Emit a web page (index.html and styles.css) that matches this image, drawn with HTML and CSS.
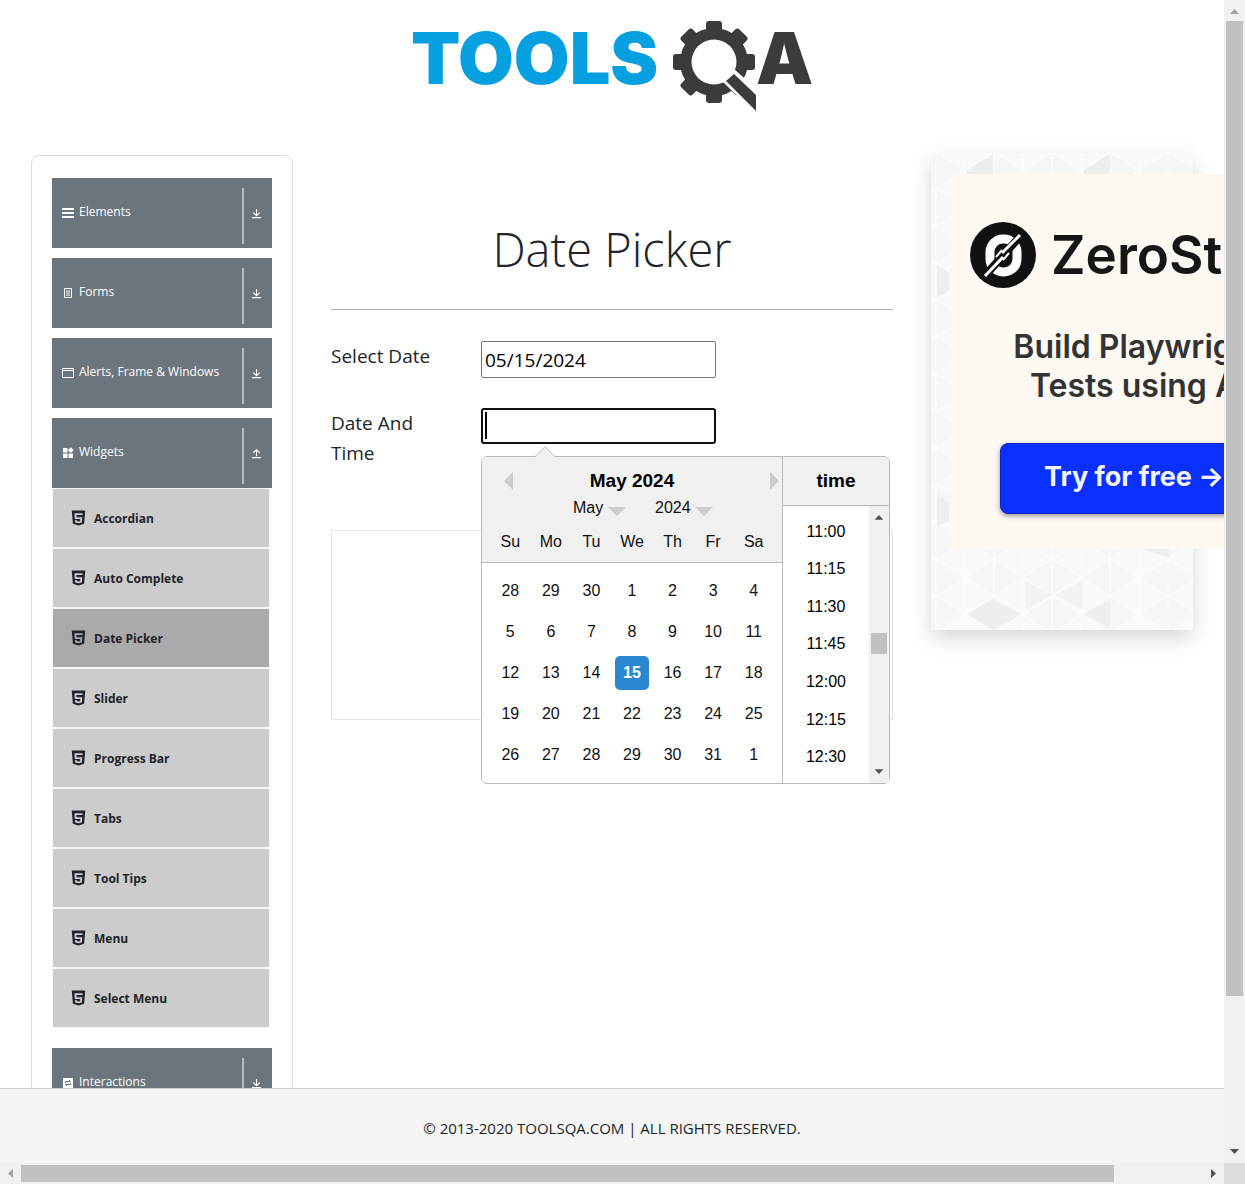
FILE: index.html
```html
<!DOCTYPE html>
<html lang="en">
<head>
<meta charset="utf-8">
<title>Date Picker</title>
<link rel="stylesheet" href="styles.css">
</head>
<body>
<svg class="defs" aria-hidden="true">
  <symbol id="i-html5" viewBox="0 0 16 16"><path fill="currentColor" fill-rule="evenodd" d="M.8 0h14.4L14 14.2 8 16l-6-1.8zM3.6 3l.5 6h5.8l-.2 2.3-1.7.5-1.8-.5-.1-1.1H4.3l.2 2.5 3.5 1 3.5-1 .5-5.5H6L5.800 4.900h6.400L12.400 3z"/></symbol>
  <symbol id="i-down" viewBox="0 0 12 12"><path fill="none" stroke="currentColor" stroke-width="1.2" d="M6 1v7M2.500 5 6 8.400 9.500 5M1 10.500h10"/></symbol>
  <symbol id="i-up" viewBox="0 0 12 12"><path fill="none" stroke="currentColor" stroke-width="1.2" d="M6 9V2M2.500 5.200 6 1.800l3.500 3.400M1 10.500h10"/></symbol>
</svg>
<div class="window">
  <div class="view">
    <header class="site-header">
      <a href="#" class="logo" aria-label="ToolsQA">
        <svg width="404" height="94" viewBox="0 0 404 94">
          <text class="brand brand-blue" x="-1" y="64">TOOLS</text>
          <g fill="#3b3b3b" transform="translate(302 42)">
            <circle r="34"/>
            <rect x="-8" y="-41" width="16" height="82" rx="3"/>
            <rect x="-8" y="-41" width="16" height="82" rx="3" transform="rotate(45)"/>
            <rect x="-8" y="-41" width="16" height="82" rx="3" transform="rotate(90)"/>
            <rect x="-8" y="-41" width="16" height="82" rx="3" transform="rotate(135)"/>
            <circle r="22.500" fill="#fff"/>
            <path fill="#fff" d="M8 19 20 7 46 30v26z"/>
            <path d="m12 19 8-7 22 21v16z"/>
          </g>
          <text class="brand brand-dark" x="344" y="64">A</text>
        </svg>
      </a>
    </header>

    <main class="columns">
      <nav class="sidebar" aria-label="Sections">
        <button class="group"><svg class="g-icon" viewBox="0 0 12 12"><path stroke="currentColor" stroke-width="2" d="M0 2h12M0 6h12M0 10h12"/></svg><span class="g-name">Elements</span><span class="g-toggle"><svg class="t-icon"><use href="#i-down"/></svg></span></button>
        <button class="group"><svg class="g-icon" viewBox="0 0 12 12"><path fill="none" stroke="currentColor" d="M2.500 1.500h7v9h-7zM4 4h4M4 6h4M4 8h4"/></svg><span class="g-name">Forms</span><span class="g-toggle"><svg class="t-icon"><use href="#i-down"/></svg></span></button>
        <button class="group"><svg class="g-icon" viewBox="0 0 12 12"><path fill="none" stroke="currentColor" d="M.5 1.500h11v9H.5zM.5 3.500h11"/></svg><span class="g-name">Alerts, Frame &amp; Windows</span><span class="g-toggle"><svg class="t-icon"><use href="#i-down"/></svg></span></button>
        <div class="open-group">
          <button class="group"><svg class="g-icon" viewBox="0 0 12 12"><path fill="currentColor" d="M1 1h4.500v4.500H1zM1 6.500h4.500V11H1zM6.500 6.500H11V11H6.500zM8.800.3l2.900 2.900-2.900 2.900-2.900-2.900z"/></svg><span class="g-name">Widgets</span><span class="g-toggle"><svg class="t-icon"><use href="#i-up"/></svg></span></button>
          <ul class="items">
            <li><a href="#" class="item"><svg class="h5"><use href="#i-html5"/></svg><span>Accordian</span></a></li>
            <li><a href="#" class="item"><svg class="h5"><use href="#i-html5"/></svg><span>Auto Complete</span></a></li>
            <li><a href="#" class="item active"><svg class="h5"><use href="#i-html5"/></svg><span>Date Picker</span></a></li>
            <li><a href="#" class="item"><svg class="h5"><use href="#i-html5"/></svg><span>Slider</span></a></li>
            <li><a href="#" class="item"><svg class="h5"><use href="#i-html5"/></svg><span>Progress Bar</span></a></li>
            <li><a href="#" class="item"><svg class="h5"><use href="#i-html5"/></svg><span>Tabs</span></a></li>
            <li><a href="#" class="item"><svg class="h5"><use href="#i-html5"/></svg><span>Tool Tips</span></a></li>
            <li><a href="#" class="item"><svg class="h5"><use href="#i-html5"/></svg><span>Menu</span></a></li>
            <li><a href="#" class="item"><svg class="h5"><use href="#i-html5"/></svg><span>Select Menu</span></a></li>
          </ul>
        </div>
        <button class="group"><svg class="g-icon" viewBox="0 0 12 12"><path fill="currentColor" d="M1 1h10v10H1z"/><path fill="none" stroke="#6c757d" d="M3.500 6V4.500h5M7 3l1.500 1.500M8.500 6v1.500h-5M5 9 3.500 7.500"/></svg><span class="g-name">Interactions</span><span class="g-toggle"><svg class="t-icon"><use href="#i-down"/></svg></span></button>
      </nav>

      <section class="content">
        <h1 class="title">Date Picker</h1>
        <form class="form">
          <div class="field">
            <label for="date">Select Date</label>
            <input class="box" id="date" type="text" value="05/15/2024">
          </div>
          <div class="field">
            <label for="datetime">Date And Time</label>
            <div class="picker">
              <input class="box focused" id="datetime" type="text">
              <span class="caret"></span>
              <div class="popup">
                <svg class="tip" width="20" height="11" viewBox="0 0 20 11"><path fill="#f0f0f0" stroke="#bbb" d="M0 10.500 10 .7l10 9.800"/><path stroke="#f0f0f0" d="M1 10.500h18"/></svg>
                <div class="month">
                  <div class="month-head">
                    <div class="month-nav">
                      <button type="button" class="nav prev" aria-label="Previous month"><svg width="9" height="18"><path fill="#ccc" d="M9 0v18L0 9z"/></svg></button>
                      <strong class="head-text">May 2024</strong>
                      <button type="button" class="nav next" aria-label="Next month"><svg width="9" height="18"><path fill="#ccc" d="M0 0v18l9-9z"/></svg></button>
                    </div>
                    <div class="drops">
                      <span class="drop"><select aria-label="Month"><option>May</option></select><svg width="18" height="9"><path fill="#ccc" d="M0 0h18L9 9z"/></svg></span>
                      <span class="drop"><select aria-label="Year"><option>2024</option></select><svg width="18" height="9"><path fill="#ccc" d="M0 0h18L9 9z"/></svg></span>
                    </div>
                    <div class="week names"><span>Su</span><span>Mo</span><span>Tu</span><span>We</span><span>Th</span><span>Fr</span><span>Sa</span></div>
                  </div>
                  <div class="days">
                    <div class="week"><button type="button">28</button><button type="button">29</button><button type="button">30</button><button type="button">1</button><button type="button">2</button><button type="button">3</button><button type="button">4</button></div>
                    <div class="week"><button type="button">5</button><button type="button">6</button><button type="button">7</button><button type="button">8</button><button type="button">9</button><button type="button">10</button><button type="button">11</button></div>
                    <div class="week"><button type="button">12</button><button type="button">13</button><button type="button">14</button><button type="button" class="selected">15</button><button type="button">16</button><button type="button">17</button><button type="button">18</button></div>
                    <div class="week"><button type="button">19</button><button type="button">20</button><button type="button">21</button><button type="button">22</button><button type="button">23</button><button type="button">24</button><button type="button">25</button></div>
                    <div class="week"><button type="button">26</button><button type="button">27</button><button type="button">28</button><button type="button">29</button><button type="button">30</button><button type="button">31</button><button type="button">1</button></div>
                  </div>
                </div>
                <div class="time">
                  <div class="time-head head-text">time</div>
                  <div class="time-body">
                    <ul class="times"><li>11:00</li><li>11:15</li><li>11:30</li><li>11:45</li><li>12:00</li><li>12:15</li><li>12:30</li></ul>
                    <div class="bar bar-v">
                      <svg class="arrow" viewBox="0 0 21 21"><path fill="#505050" d="M6 14h9l-4.500-5z"/></svg>
                      <div class="track time-track"><div class="thumb"></div></div>
                      <svg class="arrow" viewBox="0 0 21 21"><path fill="#505050" d="M6 7h9l-4.500 5z"/></svg>
                    </div>
                  </div>
                </div>
              </div>
            </div>
          </div>
        </form>
        <div class="slot"></div>
      </section>

      <aside class="promo">
        <svg class="facets" aria-hidden="true">
          <defs>
            <pattern id="tri" width="58" height="37" x="5" y="-1" patternUnits="userSpaceOnUse">
              <path fill="#f9f9f9" d="M0 0h58v37H0z"/>
              <path fill="#f6f6f6" d="M0 0v37l29-18.500zM29 18.500 58 37V0z"/>
              <path fill="none" stroke="#fdfdfd" stroke-width="1.200" d="M0 0v37M29 0v37M58 0v37M0 0l58 37M58 0 0 37"/>
            </pattern>
          </defs>
          <rect width="100%" height="100%" fill="url(#tri)"/>
          <path fill="#eee" d="m36 17 26-16v32H36zM153 17l26-16v32h-26zM6 112l12 8v18l-12 6zM6 342l12 8v18l-12 6zM36 461l26-15 28 15-28 16zM153 461l26-14v28zM212 396h26v9z"/>
          <path fill="#f2f2f2" d="m94 428 27 14-27 15zM124 442l28-15v30z"/>
        </svg>
        <a href="#" class="ad">
          <span class="ad-brand">
            <svg width="66" height="66" viewBox="0 0 66 66"><circle cx="33" cy="33" r="33" fill="#111"/><rect x="20" y="17" width="27" height="33" rx="13" fill="none" stroke="#fff" stroke-width="9"/><path stroke="#111" stroke-width="8" d="M12 57 54 10"/><path stroke="#fff" stroke-width="3" d="m15 54 18-19M32 31l18-18"/><path stroke="#fff" stroke-width="2" d="m26 35 6-7M33 38l6-7"/></svg>
            <span>ZeroStep</span>
          </span>
          <span class="ad-text">Build Playwright<br>Tests using AI</span>
          <span class="ad-cta">Try for free →</span>
        </a>
      </aside>
    </main>

    <footer class="site-footer">© 2013-2020 TOOLSQA.COM | ALL RIGHTS RESERVED.</footer>
  </div>

  <div class="bar bar-v">
    <svg class="arrow" viewBox="0 0 21 21"><path fill="#a3a3a3" d="M6 14h9l-4.500-5z"/></svg>
    <div class="track page-track"><div class="thumb"></div></div>
    <svg class="arrow" viewBox="0 0 21 21"><path fill="#505050" d="M6 7h9l-4.500 5z"/></svg>
  </div>
  <div class="bar bar-h">
    <svg class="arrow" viewBox="0 0 21 21"><path fill="#a3a3a3" d="M13 6v9l-5-4.500z"/></svg>
    <div class="track side-track"><div class="thumb"></div></div>
    <svg class="arrow" viewBox="0 0 21 21"><path fill="#505050" d="M8 6v9l5-4.500z"/></svg>
  </div>
  <div class="corner"></div>
</div>
</body>
</html>
```
FILE: styles.css
```css
* { box-sizing: border-box; }

body {
  margin: 0;
  background: #fff;
  color: #212529;
  font: 19px/30px "Open Sans", "Noto Sans", sans-serif;
}

button, input, select { font: inherit; color: inherit; }
button { margin: 0; padding: 0; border: 0; background: none; }
ul { margin: 0; padding: 0; list-style: none; }
a { color: inherit; text-decoration: none; }
svg { display: block; flex: none; }
.defs { position: absolute; width: 0; height: 0; }

/* Window frame: page, two scroll bars, corner */
.window {
  display: grid;
  grid-template-columns: minmax(0, 1fr) 21px;
  grid-template-rows: minmax(0, 1fr) 21px;
  height: 100vh;
}
.view { display: flex; flex-direction: column; overflow: hidden; }
.corner { background: #dcdcdc; }

.bar { display: flex; background: #f0f0f0; }
.bar-v { flex-direction: column; }
.arrow { width: 21px; height: 21px; }
.track { display: flex; flex: 1; }
.thumb { background: #c1c1c1; }
.bar-v .track { flex-direction: column; padding: 0 2px; }
.bar-h .track { padding: 2px 0; }
.page-track .thumb { height: 87%; }
.side-track .thumb { width: 92.500%; }

/* Header and footer */
.site-header { display: flex; justify-content: center; padding: 20px 0 39px; }
.logo { margin-left: 4px; }
.logo svg { overflow: visible; }
.brand { font: 900 72px Inter, sans-serif; }
.brand-blue { fill: #069fdf; }
.brand-dark { fill: #3b3b3b; }
.site-footer {
  flex: none;
  height: 75px;
  padding-top: 24px;
  border-top: 1px solid #ccc;
  background: #f4f4f4;
  font-size: 15px;
  text-align: center;
}

.columns {
  flex: 1;
  min-height: 0;
  display: grid;
  grid-template-columns: 262px minmax(0, 1fr) 262px;
  align-items: start;
  gap: 38px;
  padding: 2px 31px 0;
}

/* Sidebar */
.sidebar {
  display: flex;
  flex-direction: column;
  gap: 10px;
  padding: 22px 20px;
  border: 1px solid #dedede;
  border-radius: 8px;
  font-size: 12px;
}
.group {
  display: flex;
  align-items: center;
  width: 100%;
  height: 70px;
  padding-left: 10px;
  background: #6c757d;
  color: #fff;
  text-align: left;
}
.g-icon { width: 12px; height: 12px; }
.g-name { flex: 1; padding: 0 0 2px 5px; white-space: nowrap; }
.g-toggle {
  display: flex;
  align-items: center;
  height: 56px;
  margin-top: 6px;
  padding: 0 10px 5px 7px;
  border-left: 2px solid #bbb;
}
.t-icon { width: 11px; height: 11px; }
.open-group { padding-bottom: 10px; }
.items { width: 218px; }
.item {
  display: flex;
  align-items: center;
  gap: 8px;
  height: 60px;
  padding-left: 18px;
  border: 1px solid #f7f7f7;
  background: #ccc;
  font-weight: 700;
}
.item span { padding-top: 2px; }
.item.active { background: #aaa; }
.h5 { width: 15px; height: 16px; }

/* Form */
.title {
  margin: 62px 0 31px;
  padding-bottom: 28px;
  border-bottom: 1px solid #aaa;
  font-size: 47px;
  font-weight: 300;
  line-height: 64px;
  text-align: center;
}
.form { display: flex; flex-direction: column; gap: 30px; }
.field { display: grid; grid-template-columns: 112px 235px; column-gap: 38px; align-items: start; }
.box {
  display: block;
  width: 100%;
  height: 37px;
  padding: 0 3px;
  border: 1px solid #767676;
  border-radius: 2px;
  outline: 0;
  background: #fff;
  color: #000;
}
.focused { height: 36px; border: 2px solid #101010; border-radius: 3px; }
.picker { position: relative; }
.caret { position: absolute; left: 4px; top: 4px; width: 2px; height: 27px; background: #000; }
.slot { height: 190px; margin-top: 62px; border: 1px solid #e4e4e4; }

/* Calendar popup */
.popup {
  position: absolute;
  top: 48px;
  left: 0;
  z-index: 1;
  display: grid;
  grid-template-columns: 301px 106px;
  width: 409px;
  border: 1px solid #bbb;
  border-radius: 6px;
  background: #fff;
  color: #000;
  font: 16px/20px "Liberation Sans", Arial, sans-serif;
}
.tip { position: absolute; left: 53px; top: -11px; }
.head-text { font-size: 19px; font-weight: 700; text-align: center; }
.month { border-right: 1px solid #bbb; }
.month-head {
  height: 106px;
  padding-top: 14px;
  border-bottom: 1px solid #bbb;
  border-radius: 5px 0 0;
  background: #f0f0f0;
}
.month-nav { display: grid; grid-template-columns: 31px 1fr 31px; align-items: center; }
.nav { display: flex; justify-content: flex-end; }
.next { padding-right: 3px; }
.drops { display: flex; justify-content: center; gap: 29px; padding: 7px 0 0 22px; }
.drop { display: flex; align-items: center; gap: 4px; }
.drop svg { margin-top: 6px; }
.drop select { appearance: none; padding: 0; border: 0; background: none; }
.drops, .week { color: #111; }
.week { display: grid; grid-template-columns: repeat(7, 1fr); padding: 0 8px; justify-items: center; }
.names { padding-top: 14px; }
.days { display: grid; gap: 7px; padding: 11px 0; }
.days button { width: 34px; height: 34px; border-radius: 5px; }
.days .selected { background: #2a87d0; color: #fff; font-weight: 700; }
.time { display: flex; flex-direction: column; }
.time-head {
  height: 49px;
  padding-top: 14px;
  border-bottom: 1px solid #bbb;
  border-radius: 0 5px 0 0;
  background: #f0f0f0;
}
.time-body { flex: 1; display: grid; grid-template-columns: 1fr 20px; }
.times { display: grid; grid-auto-rows: 1fr; align-items: center; padding: 7px 0; text-align: center; }
.time-body .arrow { width: 20px; height: 21px; }
.time-track::before { content: ""; height: 45%; }
.time-track .thumb { height: 21px; }

/* Promo */
.promo {
  position: relative;
  height: 477px;
  margin-top: -2px;
  padding: 21px 0 0 20px;
  background: #f8f8f8;
  box-shadow: 0 8px 20px rgba(0, 0, 0, .16);
}
.facets { position: absolute; top: 0; left: 0; width: 100%; height: 100%; }
.ad {
  position: relative;
  display: flex;
  flex-direction: column;
  align-items: center;
  width: 375px;
  height: 375px;
  padding-top: 48px;
  background: #fef8f2;
  color: #161616;
  font-family: Inter, sans-serif;
  font-weight: 600;
}
.ad-brand { display: flex; align-items: center; gap: 15px; width: 337px; height: 66px; font-size: 53px; }
.ad-text { margin-top: 39px; color: #333; font-size: 32px; line-height: 39px; text-align: center; }
.ad-cta {
  width: 277px;
  height: 71px;
  margin-top: 38px;
  padding-left: 43px;
  border: 1px solid #1420c0;
  border-radius: 8px;
  background: #0a30ff;
  box-shadow: 0 2px 5px rgba(0, 0, 0, .4);
  color: #f1f3ff;
  font-size: 27px;
  font-weight: 700;
  line-height: 66px;
}
```
